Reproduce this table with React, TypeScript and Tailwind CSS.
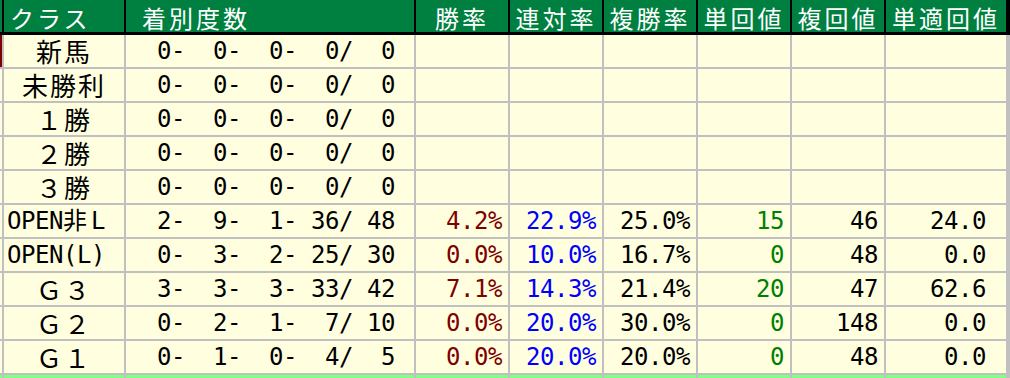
import React from "react";

const mono =
  "inline-block font-['DejaVu_Sans_Mono','Noto_Sans_CJK_JP',monospace] text-[24px] tracking-[-0.45px] leading-[32px] whitespace-pre";
const cjk =
  "inline-block font-['Noto_Sans_CJK_JP',sans-serif] text-[26px] tracking-[2px] leading-[32px] whitespace-pre";
const head =
  "inline-block font-['Noto_Sans_CJK_JP',sans-serif] text-[24px] tracking-[3px] leading-[35px] whitespace-pre text-white";

type Stat = { v: string; c: string };
type Row = {
  label: React.ReactNode;
  align: "center" | "left";
  counts: string;
  stats: Stat[] | null;
};

const M = "text-[#800000]";
const B = "text-[#0000ff]";
const K = "text-black";
const G = "text-[#008000]";

const rows: Row[] = [
  { label: <span className={cjk}>新馬</span>, align: "center", counts: "  0-  0-  0-  0/  0", stats: null },
  { label: <span className={cjk}>未勝利</span>, align: "center", counts: "  0-  0-  0-  0/  0", stats: null },
  { label: <span className={cjk}>１勝</span>, align: "center", counts: "  0-  0-  0-  0/  0", stats: null },
  { label: <span className={cjk}>２勝</span>, align: "center", counts: "  0-  0-  0-  0/  0", stats: null },
  { label: <span className={cjk}>３勝</span>, align: "center", counts: "  0-  0-  0-  0/  0", stats: null },
  {
    label: (
      <span className={mono}>
        OPEN<span className="tracking-[4px]">非</span>L
      </span>
    ),
    align: "left",
    counts: "  2-  9-  1- 36/ 48",
    stats: [
      { v: "4.2%", c: M },
      { v: "22.9%", c: B },
      { v: "25.0%", c: K },
      { v: "15", c: G },
      { v: "46", c: K },
      { v: "24.0", c: K },
    ],
  },
  {
    label: <span className={mono}>OPEN(L)</span>,
    align: "left",
    counts: "  0-  3-  2- 25/ 30",
    stats: [
      { v: "0.0%", c: M },
      { v: "10.0%", c: B },
      { v: "16.7%", c: K },
      { v: "0", c: G },
      { v: "48", c: K },
      { v: "0.0", c: K },
    ],
  },
  {
    label: <span className={cjk}>Ｇ３</span>,
    align: "center",
    counts: "  3-  3-  3- 33/ 42",
    stats: [
      { v: "7.1%", c: M },
      { v: "14.3%", c: B },
      { v: "21.4%", c: K },
      { v: "20", c: G },
      { v: "47", c: K },
      { v: "62.6", c: K },
    ],
  },
  {
    label: <span className={cjk}>Ｇ２</span>,
    align: "center",
    counts: "  0-  2-  1-  7/ 10",
    stats: [
      { v: "0.0%", c: M },
      { v: "20.0%", c: B },
      { v: "30.0%", c: K },
      { v: "0", c: G },
      { v: "148", c: K },
      { v: "0.0", c: K },
    ],
  },
  {
    label: <span className={cjk}>Ｇ１</span>,
    align: "center",
    counts: "  0-  1-  0-  4/  5",
    stats: [
      { v: "0.0%", c: M },
      { v: "20.0%", c: B },
      { v: "20.0%", c: K },
      { v: "0", c: G },
      { v: "48", c: K },
      { v: "0.0", c: K },
    ],
  },
];

const statCell = "w-[94px] shrink-0 border-r-2 border-[#c0c0c0] flex items-center justify-end pr-[6px]";
const lastCell = "w-[124px] shrink-0 border-r-4 border-[#c0c0c0] flex items-center justify-end pr-[20px]";

export default function App() {
  return (
    <div className="w-[1010px] h-[378px] overflow-hidden bg-[#ffffe0] select-none">
      {/* Header */}
      <div className="flex h-[35px] bg-[#008040] border-b-[3px] border-black">
        <div className="w-[2px] shrink-0" />
        <div className="w-[2px] shrink-0 bg-black" />
        <div className="w-[122px] shrink-0 border-r-2 border-black pl-[6px] flex items-start">
          <span className={head}>クラス</span>
        </div>
        <div className="w-[290px] shrink-0 border-r-2 border-black pl-[16px] flex items-start">
          <span className={head}>着別度数</span>
        </div>
        <div className="w-[94px] shrink-0 border-r-2 border-black flex items-start justify-center">
          <span className={head}>勝率</span>
        </div>
        <div className="w-[94px] shrink-0 border-r-2 border-black flex items-start justify-center">
          <span className={head}>連対率</span>
        </div>
        <div className="w-[94px] shrink-0 border-r-2 border-black flex items-start justify-center">
          <span className={head}>複勝率</span>
        </div>
        <div className="w-[94px] shrink-0 border-r-2 border-black flex items-start justify-center">
          <span className={head}>単回値</span>
        </div>
        <div className="w-[94px] shrink-0 border-r-2 border-black flex items-start justify-center">
          <span className={head}>複回値</span>
        </div>
        <div className="w-[124px] shrink-0 border-r-4 border-black flex items-start justify-center">
          <span className={head}>単適回値</span>
        </div>
      </div>

      {/* Body */}
      {rows.map((r, i) => (
        <div key={i} className="flex h-[34px] border-b-2 border-[#c0c0c0] text-black">
          <div className={i === 0 ? "w-[2px] shrink-0 bg-[#800000]" : "w-[2px] shrink-0"} />
          <div className="w-[2px] shrink-0 bg-[#c0c0c0]" />
          <div
            className={
              r.align === "center"
                ? "w-[122px] shrink-0 border-r-2 border-[#c0c0c0] flex items-center justify-center"
                : "w-[122px] shrink-0 border-r-2 border-[#c0c0c0] flex items-center pl-[3px]"
            }
          >
            {r.label}
          </div>
          <div className="w-[290px] shrink-0 border-r-2 border-[#c0c0c0] flex items-center pl-[3px]">
            <span className={mono}>{r.counts}</span>
          </div>
          {[0, 1, 2, 3, 4].map((j) => (
            <div key={j} className={statCell}>
              {r.stats && <span className={`${mono} ${r.stats[j].c}`}>{r.stats[j].v}</span>}
            </div>
          ))}
          <div className={lastCell}>
            {r.stats && <span className={`${mono} ${r.stats[5].c}`}>{r.stats[5].v}</span>}
          </div>
        </div>
      ))}

      {/* Bottom green band */}
      <div className="flex h-[3px] bg-[#80ff80]">
        <div className="w-[2px] shrink-0" />
        <div className="w-[2px] shrink-0 bg-[#c0c0c0]" />
        <div className="w-[122px] shrink-0 border-r-2 border-[#c0c0c0]" />
        <div className="w-[290px] shrink-0 border-r-2 border-[#c0c0c0]" />
        <div className="w-[94px] shrink-0 border-r-2 border-[#c0c0c0]" />
        <div className="w-[94px] shrink-0 border-r-2 border-[#c0c0c0]" />
        <div className="w-[94px] shrink-0 border-r-2 border-[#c0c0c0]" />
        <div className="w-[94px] shrink-0 border-r-2 border-[#c0c0c0]" />
        <div className="w-[94px] shrink-0 border-r-2 border-[#c0c0c0]" />
        <div className="w-[124px] shrink-0 border-r-4 border-[#c0c0c0]" />
      </div>
    </div>
  );
}
